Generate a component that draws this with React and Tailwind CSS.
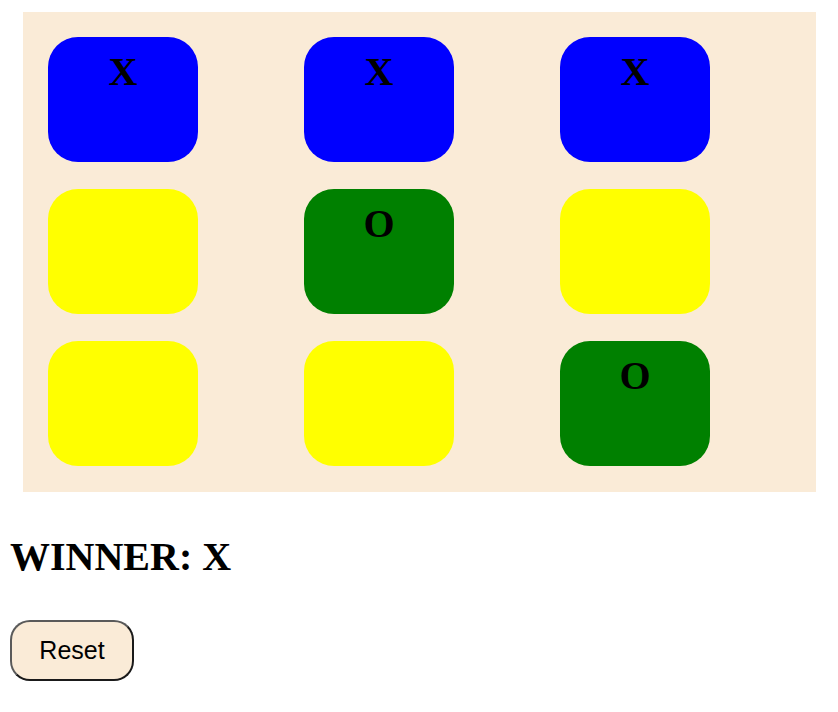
const board = ['X', 'X', 'X', null, 'O', null, null, null, 'O'];

function Cell({ value }) {
  const color = value === 'X' ? 'bg-[#0000ff]' : value === 'O' ? 'bg-[#008000]' : 'bg-[#ffff00]';
  return (
    <div className={`w-[150px] h-[125px] rounded-[30px] ${color} pt-[12px] text-center`}>
      <span className="text-[40px] leading-[46px] font-bold text-black">{value}</span>
    </div>
  );
}

export default function App() {
  return (
    <div className="px-[10px] pt-[12px] font-['Liberation_Serif',serif] text-black">
      <div className="ml-[13px] w-[793px] h-[480px] bg-[#faebd7] pl-[25px] pt-[25px] grid grid-cols-[256px_256px_256px] auto-rows-[125px] gap-y-[27px]">
        {board.map((v, i) => (
          <Cell key={i} value={v} />
        ))}
      </div>
      <h1 className="mt-[42px] text-[40px] leading-[46px] font-bold">WINNER: X</h1>
      <button className="mt-[40px] w-[124px] h-[61px] rounded-[20px] bg-[#faebd7] border-2 border-t-[#5a5a5a] border-l-[#5a5a5a] border-r-[#1a1a1a] border-b-[#1a1a1a] font-['Liberation_Sans',sans-serif] text-[25px]">
        Reset
      </button>
    </div>
  );
}
